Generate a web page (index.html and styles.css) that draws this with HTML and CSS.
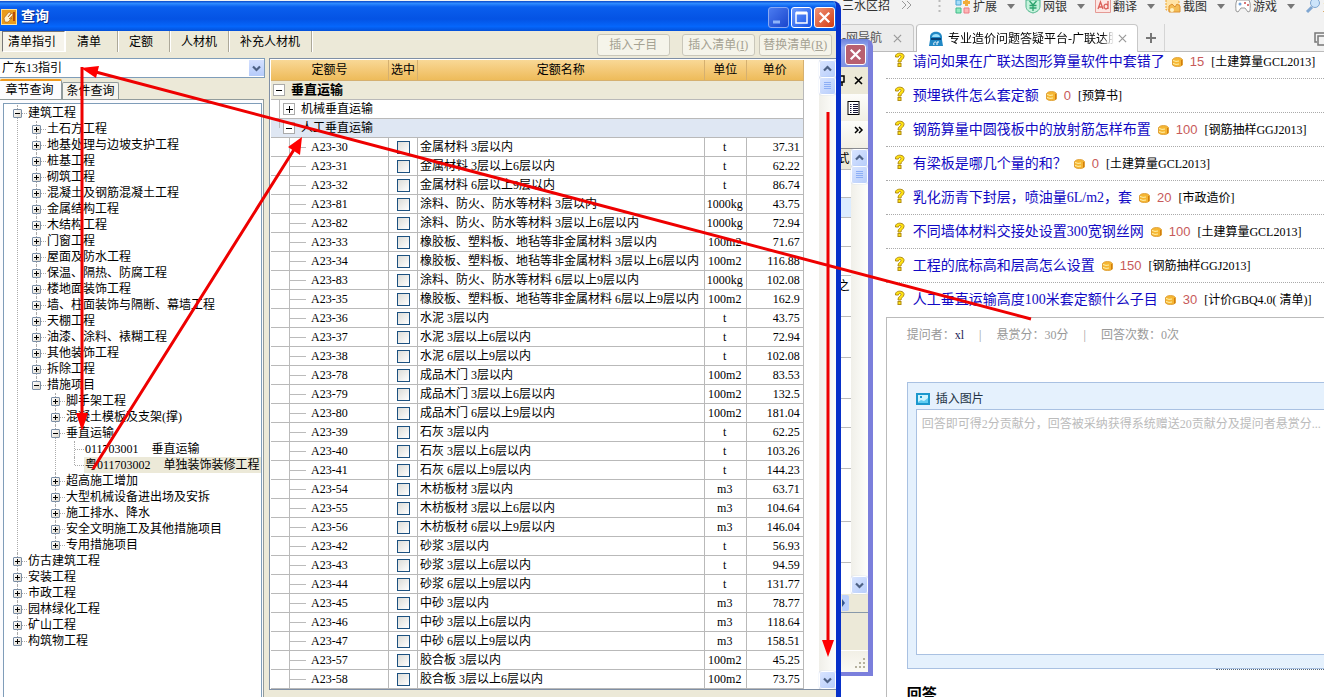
FILE: index.html
```html
<!DOCTYPE html>
<html lang="zh-CN">
<head>
<meta charset="utf-8">
<title>查询</title>
<link rel="stylesheet" href="styles.css">
</head>
<body>
<svg class="defs" aria-hidden="true">
  <symbol id="i-q" viewBox="0 0 11 15"><path d="M1.500 5C.5 0 10.500 0 10 4.500C9.700 7.500 7 7 7 10H4C3.800 6.500 7 6 7 4.500C7 3 4.500 3 4.500 5Z" fill="#ffe312" stroke="#b18b12"/><rect x="4" y="11.500" width="3" height="3" fill="#ffe312" stroke="#b18b12"/></symbol>
  <symbol id="i-coin" viewBox="0 0 11 10"><path d="M.5 2.500Q2 .5 5.500.5T10.500 2.500V8Q9 9.500 5.500 9.500T.5 8z" fill="#f6b632" stroke="#e0a23a"/><path d="M1 3.500Q4 5 7 4M1 6.500Q4 8 7 7" fill="none" stroke="#fff3ad"/><path d="M9.500 3v5.500" stroke="#d27d0d"/></symbol>
  <symbol id="i-up" viewBox="0 0 15 16"><path d="M4 9.500 7.500 6 11 9.500" fill="none" stroke="#4d6185" stroke-width="2.200"/></symbol>
  <symbol id="i-down" viewBox="0 0 15 16"><path d="M4 6.500 7.500 10 11 6.500" fill="none" stroke="#4d6185" stroke-width="2.200"/></symbol>
  <symbol id="i-grip" viewBox="0 0 15 16"><path d="M4 4.500h7M4 6.500h7M4 8.500h7M4 10.500h7" stroke="#8caef5"/></symbol>
  <symbol id="i-x" viewBox="0 0 20 20"><path d="M5 5 15 15M15 5 5 15" stroke="#fff" stroke-width="2.400"/></symbol>
  <symbol id="i-tri" viewBox="0 0 8 5"><path d="M0 0h8L4 5z" fill="#777"/></symbol>
  <symbol id="i-close" viewBox="0 0 10 10"><path d="M1 1 9 9M9 1 1 9" stroke="#999" stroke-width="1.300"/></symbol>
</svg>

<div class="desktop">
  <section class="browser" aria-label="浏览器">
    <div class="browser-tools">
      <span class="bookmark">三水区招</span>
      <svg class="more" width="12" height="10" viewBox="0 0 12 10"><path d="M1 1l4 4-4 4M6 1l4 4-4 4" fill="none" stroke="#999"/></svg>
      <svg class="dots" width="3" height="14" viewBox="0 0 3 14"><path d="M1.500 0v14" stroke="#bbb" stroke-width="2" stroke-dasharray="2 3"/></svg>
      <button class="tool"><svg width="16" height="15" viewBox="0 0 16 15"><path d="M9 9h5v5H9z" fill="#fdb7b7" stroke="#ed7b85"/><path d="M1 9h5v5H1z" fill="#92ebc0" stroke="#41ba8a"/><path d="M1 1h5v5H1z" fill="#a8ddf9" stroke="#47a5d6"/><path d="M11.500 0v7M8 3.500h7" stroke="#f2ac39" stroke-width="3"/></svg><span>扩展</span><svg width="8" height="5"><use href="#i-tri"/></svg></button>
      <button class="tool"><svg width="16" height="15" viewBox="0 0 16 15"><path d="M1 1v6c0 4 3 6 7 7 4-1 7-3 7-7V1z" fill="#c6f2dc" stroke="#4fb58b"/><path d="M4.500 2 8 6l3.500-4M4.500 6.500h7M4.500 9h7M8 6v6" fill="none" stroke="#2ca36d" stroke-width="1.300"/></svg><span>网银</span><svg width="8" height="5"><use href="#i-tri"/></svg></button>
      <button class="tool"><svg width="16" height="15" viewBox="0 0 16 15"><path d="M.5 0v13.500h15V0" fill="#fde6e3" stroke="#e59a95"/><path d="M3 10 5.500 3 8 10M4 8h3M13 2v8M13 7a2 2.300 0 1 0 0 1" fill="none" stroke="#db5f58" stroke-width="1.300"/></svg><span>翻译</span><svg width="8" height="5"><use href="#i-tri"/></svg></button>
      <button class="tool"><svg width="16" height="15" viewBox="0 0 16 15"><rect x="1" y="0" width="13" height="11" fill="#ffe4a8" stroke="#eea52f" stroke-dasharray="2 1"/><path d="M4 13V7l3-2 3 3 2-3 3 2v6z" fill="#f3bd56" stroke="#dd9130"/><circle cx="7" cy="11" r="2" fill="#fff3c4"/></svg><span>截图</span><svg width="8" height="5"><use href="#i-tri"/></svg></button>
      <button class="tool"><svg width="16" height="15" viewBox="0 0 16 15"><path d="M2 1h12c2 4 1 8 1 11l-2 1-3-4H6l-3 4-2-1C1 9 0 5 2 1z" fill="#fff" stroke="#999"/><circle cx="5" cy="5" r="1.500" fill="#71a2d8"/><path d="M9 4h2M12 6h2" stroke="#d97777" stroke-width="2"/></svg><span>游戏</span><svg width="8" height="5"><use href="#i-tri"/></svg></button>
      <button class="tool"><svg width="16" height="15" viewBox="0 0 16 15"><circle cx="10" cy="4" r="4.500" fill="#cce4fa" stroke="#7fa6d1"/><path d="M7 8 2 13" stroke="#7fa6d1" stroke-width="3"/></svg><span>主页</span></button>
    </div>
    <div class="browser-tabs">
      <div class="btab"><span>-网导航</span><svg width="9" height="9"><use href="#i-close"/></svg></div>
      <div class="btab active">
        <svg width="16" height="16" viewBox="0 0 16 16"><path d="M2 6C2-1 14-1 14 6v3l1 6H1l1-6z" fill="#2188c5"/><path d="M4 6c0-4 8-4 8 0z" fill="#9fe0fb"/><path d="M3 8h10" stroke="#073f75" stroke-width="2"/><path d="M6 14c-1-3 1-3 2-3M9 14v-3h2" fill="none" stroke="#fff"/></svg>
        <span class="btab-title">专业造价问题答疑平台-广联达服</span><svg width="9" height="9"><use href="#i-close"/></svg>
      </div>
      <button class="newtab" aria-label="新标签"><svg width="12" height="12" viewBox="0 0 12 12"><path d="M6 1v10M1 6h10" stroke="#777" stroke-width="2"/></svg></button>
      <svg class="restore" width="12" height="14" viewBox="0 0 12 14"><path d="M12 1H1v9h2M12 4H4v9h8" fill="none" stroke="#777" stroke-width="1.500"/></svg>
    </div>
    <main class="page">
      <ul class="questions" id="questions"></ul>
      <article class="detail">
        <p class="meta"><span>提问者：<b>xl</b></span><i>|</i><span>悬赏分：30分</span><i>|</i><span>回答次数：0次</span></p>
        <div class="editor">
          <button class="insert-pic"><svg width="14" height="12" viewBox="0 0 14 12"><rect x="1" y="1" width="12" height="10" fill="#cdf4ff" stroke="#1b98cd" stroke-width="2"/><path d="M2 9l3-2 3 1 4-3v5H2z" fill="#5fcdf2"/><path d="M4 3h2v2H4z" fill="#1b98cd"/></svg><label for="answer">插入图片</label></button>
          <textarea id="answer" placeholder="回答即可得2分贡献分，回答被采纳获得系统赠送20贡献分及提问者悬赏分..."></textarea>
        </div>
        <div class="hint-edge"></div>
        <h2>回答</h2>
      </article>
    </main>
  </section>

  <section class="backwin" aria-label="后台窗口">
    <div class="bw-title"><button class="bw-close" aria-label="关闭"><svg width="19" height="19"><use href="#i-x"/></svg></button></div>
    <div class="bw-body">
      <div class="bw-bar"><svg width="25" height="12" viewBox="0 0 25 12"><path d="M0 1h5v6H0M3 7v4" fill="none" stroke="#000" stroke-width="1.500"/><path d="M16 2l7 7M23 2l-7 7" stroke="#000" stroke-width="1.600"/></svg></div>
      <div class="bw-bar light"><svg width="20" height="14" viewBox="0 0 20 14"><rect x="4" y=".5" width="11" height="13" fill="#fff" stroke="#000"/><path d="M6 3.500h1.500M9 3.500h5M6 5.500h1.500M9 5.500h5M6 7.500h1.500M9 7.500h5M6 9.500h1.500M9 9.500h5M6 11.500h1.500M9 11.500h5" stroke="#113"/></svg></div>
      <div class="bw-bar light arrow"><svg width="16" height="8" viewBox="0 0 16 8"><path d="M7 1l3 3-3 3M11 1l3 3-3 3" fill="none" stroke="#000" stroke-width="1.500"/></svg></div>
      <div class="bw-grid">
        <div class="bw-cells"><span class="h">式</span><span></span><span class="sel"></span><span class="r2"></span><span class="r2"></span><span class="r3">之</span><span class="r3"></span><span class="r3"></span><span class="r2"></span><span class="r3"></span><span class="r4"></span><span class="r3"></span></div>
        <div class="scroll"><button aria-label="上"><svg><use href="#i-up"/></svg></button><button aria-label="滑块"><svg><use href="#i-grip"/></svg></button><button class="end" aria-label="下"><svg><use href="#i-down"/></svg></button></div>
      </div>
      <div class="bw-hscroll"><svg width="8" height="16" viewBox="0 0 8 16"><path d="M0 0h5q2 0 2 2v12q0 2-2 2H0z" fill="#bcd0fb"/><path d="M0 4l3 4-3 4z" fill="#34558f"/></svg></div>
      <div class="bw-blank"></div>
      <div class="bw-status"><svg width="12" height="12" viewBox="0 0 12 12"><path d="M9 1h2M9 5h2M9 9h2M5 5h2M5 9h2M1 9h2" stroke="#b5b19e" stroke-width="2"/></svg></div>
    </div>
  </section>

  <section class="dialog" aria-label="查询">
    <header class="titlebar">
      <svg width="16" height="16" viewBox="0 0 16 16"><rect x=".5" y=".5" width="15" height="15" fill="#e99b1b" stroke="#ffe29a"/><path d="M3 9l5-6 2 1-3 4 4-4 1 2-4 4 3-1-4 4H4z" fill="#fff3cf" stroke="#9c4b0b" stroke-width=".5"/><path d="M13 3v9" stroke="#b64c08" stroke-width="2"/></svg>
      <h1>查询</h1>
      <button class="cap" aria-label="最小化"><svg width="19" height="19" viewBox="0 0 19 19"><path d="M4 14h7" stroke="#8fb4fa" stroke-width="3"/></svg></button>
      <button class="cap lit" aria-label="最大化"><svg width="19" height="19" viewBox="0 0 19 19"><path d="M4 5h11v10H4z" fill="none" stroke="#fff" stroke-width="1.500"/><path d="M4 5h11" stroke="#fff" stroke-width="3"/></svg></button>
      <button class="cap close" aria-label="关闭"><svg width="19" height="19"><use href="#i-x"/></svg></button>
    </header>
    <nav class="toolbar">
      <button class="tb on">清单指引</button><button class="tb">清单</button><button class="tb">定额</button><button class="tb">人材机</button><button class="tb">补充人材机</button>
      <div class="actions"><button disabled class="first">插入子目</button><button disabled>插入清单(<u>I</u>)</button><button disabled>替换清单(<u>R</u>)</button></div>
    </nav>
    <div class="content">
      <aside class="left">
        <div class="combo"><select aria-label="指引"><option>广东13指引</option></select><span class="combo-arrow"><svg width="15" height="16"><use href="#i-down"/></svg></span></div>
        <div class="subtabs"><button class="on">章节查询</button><button>条件查询</button></div>
        <div class="treepane"><div class="treebox" id="tree"></div></div>
      </aside>
      <div class="right">
        <div class="tablewrap">
          <table>
            <colgroup><col class="c-no"><col class="c-ck"><col><col class="c-unit"><col class="c-price"></colgroup>
            <thead><tr><th>定额号</th><th>选中</th><th>定额名称</th><th>单位</th><th>单价</th></tr></thead>
            <tbody id="rows">
              <tr class="g g1"><td colspan="5"><div><button class="sq" aria-label="折叠"></button>垂直运输</div></td></tr>
              <tr class="g g2"><td colspan="5"><div><button class="sq plus" aria-label="展开"></button>机械垂直运输</div></td></tr>
              <tr class="g g2 cur"><td colspan="5"><div><button class="sq" aria-label="折叠"></button>人工垂直运输</div></td></tr>
            </tbody>
          </table>
        </div>
        <div class="scroll"><button aria-label="上"><svg><use href="#i-up"/></svg></button><button aria-label="滑块"><svg><use href="#i-grip"/></svg></button><button class="end" aria-label="下"><svg><use href="#i-down"/></svg></button></div>
      </div>
    </div>
  </section>

  <svg class="marks" viewBox="0 0 1324 697" preserveAspectRatio="none" aria-hidden="true">
    <path d="M1031 319 92 71M82 67V418M93 469 295 148M828 112V644" fill="none" stroke="#ee0000" stroke-width="3"/>
    <path d="M81 68 99 66 96 78zM76 413h12l-6 18zM302 137 288 147 300 155zM822 640h12l-6 17z" fill="#ff0000"/>
  </svg>
</div>
<script src="app.js"></script>
</body>
</html>
```
FILE: app.js
```js
const rows = [
  ['30', '金属材料 3层以内', 't', '37.31'],
  ['31', '金属材料 3层以上6层以内', 't', '62.22'],
  ['32', '金属材料 6层以上9层以内', 't', '86.74'],
  ['81', '涂料、防火、防水等材料 3层以内', '1000kg', '43.75'],
  ['82', '涂料、防火、防水等材料 3层以上6层以内', '1000kg', '72.94'],
  ['33', '橡胶板、塑料板、地毡等非金属材料 3层以内', '100m2', '71.67'],
  ['34', '橡胶板、塑料板、地毡等非金属材料 3层以上6层以内', '100m2', '116.88'],
  ['83', '涂料、防火、防水等材料 6层以上9层以内', '1000kg', '102.08'],
  ['35', '橡胶板、塑料板、地毡等非金属材料 6层以上9层以内', '100m2', '162.9'],
  ['36', '水泥 3层以内', 't', '43.75'],
  ['37', '水泥 3层以上6层以内', 't', '72.94'],
  ['38', '水泥 6层以上9层以内', 't', '102.08'],
  ['78', '成品木门 3层以内', '100m2', '83.53'],
  ['79', '成品木门 3层以上6层以内', '100m2', '132.5'],
  ['80', '成品木门 6层以上9层以内', '100m2', '181.04'],
  ['39', '石灰 3层以内', 't', '62.25'],
  ['40', '石灰 3层以上6层以内', 't', '103.26'],
  ['41', '石灰 6层以上9层以内', 't', '144.23'],
  ['54', '木枋板材 3层以内', 'm3', '63.71'],
  ['55', '木枋板材 3层以上6层以内', 'm3', '104.64'],
  ['56', '木枋板材 6层以上9层以内', 'm3', '146.04'],
  ['42', '砂浆 3层以内', 't', '56.93'],
  ['43', '砂浆 3层以上6层以内', 't', '94.59'],
  ['44', '砂浆 6层以上9层以内', 't', '131.77'],
  ['45', '中砂 3层以内', 'm3', '78.77'],
  ['46', '中砂 3层以上6层以内', 'm3', '118.64'],
  ['47', '中砂 6层以上9层以内', 'm3', '158.51'],
  ['57', '胶合板 3层以内', '100m2', '45.25'],
  ['58', '胶合板 3层以上6层以内', '100m2', '73.75']
];
document.getElementById('rows').insertAdjacentHTML('beforeend', rows.map(([no, name, unit, price]) =>
  `<tr><td class="no">A23-${no}</td><td class="ck"><input type="checkbox" aria-label="A23-${no}"></td><td class="name">${name}</td><td class="unit">${unit}</td><td class="price">${price}</td></tr>`).join(''));

const tree = [
  ['建筑工程', [
    ['土石方工程'], ['地基处理与边坡支护工程'], ['桩基工程'], ['砌筑工程'],
    ['混凝土及钢筋混凝土工程'], ['金属结构工程'], ['木结构工程'], ['门窗工程'],
    ['屋面及防水工程'], ['保温、隔热、防腐工程'], ['楼地面装饰工程'],
    ['墙、柱面装饰与隔断、幕墙工程'], ['天棚工程'], ['油漆、涂料、裱糊工程'],
    ['其他装饰工程'], ['拆除工程'],
    ['措施项目', [
      ['脚手架工程'], ['混凝土模板及支架(撑)'],
      ['垂直运输', [
        ['<span>011703001</span><span>垂直运输</span>', 'leaf'],
        ['<span>粤011703002</span><span>单独装饰装修工程</span>', 'leaf sel']
      ]],
      ['超高施工增加'], ['大型机械设备进出场及安拆'], ['施工排水、降水'],
      ['安全文明施工及其他措施项目'], ['专用措施项目']
    ]]
  ]],
  ['仿古建筑工程'], ['安装工程'], ['市政工程'], ['园林绿化工程'], ['矿山工程'], ['构筑物工程']
];
const branch = items => `<ul>${items.map(([label, sub]) => {
  if (typeof sub === 'string') return `<li class="${sub}"><div class="node"><span class="label">${label}</span></div></li>`;
  return `<li><div class="node"><button class="box ${sub ? '' : 'plus'}" aria-label="${sub ? '折叠' : '展开'}"></button><span class="label">${label}</span></div>${sub ? branch(sub) : ''}</li>`;
}).join('')}</ul>`;
document.getElementById('tree').innerHTML = branch(tree);

const questions = [
  ['请问如果在广联达图形算量软件中套错了', 15, '土建算量GCL2013'],
  ['预埋铁件怎么套定额', 0, '预算书'],
  ['钢筋算量中圆筏板中的放射筋怎样布置', 100, '钢筋抽样GGJ2013'],
  ['有梁板是哪几个量的和？', 0, '土建算量GCL2013'],
  ['乳化沥青下封层，喷油量6L/m2，套', 20, '市政造价'],
  ['不同墙体材料交接处设置300宽钢丝网', 100, '土建算量GCL2013'],
  ['工程的底标高和层高怎么设置', 150, '钢筋抽样GGJ2013'],
  ['人工垂直运输高度100米套定额什么子目', 30, '计价GBQ4.0( 清单)']
];
document.getElementById('questions').innerHTML = questions.map(([t, p, c]) =>
  `<li><svg class="q" width="11" height="15"><use href="#i-q"/></svg><a href="#">${t}</a><svg width="11" height="10"><use href="#i-coin"/></svg><span class="pts">${p}</span><span class="cat">[${c}]</span></li>`).join('');
```
FILE: styles.css
```css
* { box-sizing: border-box; }
body {
  margin: 0;
  font: 12px/16px "Liberation Serif", "Noto Sans CJK SC", serif;
  color: #000;
}
button, select, textarea { font: inherit; color: inherit; margin: 0; }
button { padding: 0; border: 0; background: none; }
ul { list-style: none; margin: 0; padding: 0; }
h1, h2, p { margin: 0; }
svg { display: block; flex: none; }
.defs { position: absolute; width: 0; height: 0; }
.desktop { position: relative; height: 100vh; overflow: hidden; background: #fff; }

/* browser */
.browser { height: 100%; display: flex; flex-direction: column; }
.browser-tools {
  display: flex; align-items: flex-start; height: 24px; padding-left: 63.6%;
  background: #f2f2f2; overflow: hidden; line-height: 12px; color: #333; white-space: nowrap;
}
.bookmark { flex: none; margin-right: 11px; }
.more { margin-right: 25px; }
.dots { margin-right: 14px; }
.tool { display: flex; align-items: center; gap: 2px; width: 70px; height: 13px; flex: none; line-height: 12px; }
.tool > svg:last-child { margin-left: 8px; }
.browser-tabs {
  display: flex; height: 28px; padding-left: 63.6%; background: #f2f2f2;
  border-bottom: 1px solid #bbb; white-space: nowrap;
}
.btab {
  display: flex; align-items: center; justify-content: space-between; flex: none;
  width: 72px; padding: 0 11px 0 0; border: 1px solid #c8c8c8; border-left: 0;
  border-bottom: 0; border-radius: 0 4px 0 0; color: #555; background: #ececec;
}
.btab.active {
  width: 222px; margin: 0 0 -1px 2px; padding: 0 10px 0 11px; gap: 4px; color: #000;
  border-left: 1px solid #bbb; border-radius: 4px 4px 0 0; background: #fff;
}
.btab-title { flex: 1; overflow: hidden; -webkit-mask-image: linear-gradient(90deg, #000 93%, transparent); mask-image: linear-gradient(90deg, #000 93%, transparent); }
.newtab { display: flex; align-items: center; padding: 0 7px; border-right: 1px solid #d5d5d5; }
.restore { margin: 8px -2px 0 auto; }
.page { flex: 1; min-height: 0; overflow: hidden; padding-left: 66.9%; display: flex; flex-direction: column; }
.questions { margin-top: -7px; }
.questions li {
  display: flex; align-items: center; gap: 7px; height: 34px; padding: 0 0 0 8px;
  border-bottom: 1px dotted #aaa; white-space: nowrap;
}
.questions li:last-child { border-bottom: 0; }
.questions .q { margin: 0 1px 5px 0; }
.questions a { font-size: 14px; color: #1109c4; text-decoration: none; }
.pts { font: 13px/16px "Liberation Sans", sans-serif; color: #c75a5a; }
.detail { flex: 1; border: 1px solid #bbb; border-right: 0; border-bottom: 0; padding: 9px 0 0 20px; white-space: nowrap; }
.meta { display: flex; color: #999; gap: 15px; }
.meta b { font-weight: normal; color: #225; }
.meta i { font-style: normal; }
.editor {
  height: 287px; margin-top: 39px; padding: 8px 0 13px 8px; display: flex; flex-direction: column; gap: 2px;
  border: 1px solid #a9c1e2; border-right: 0; background: #e5f1fd;
}
.insert-pic { display: flex; align-items: center; gap: 6px; color: #234; align-self: flex-start; }
.editor textarea {
  flex: 1; width: 100%; resize: none; border: 1px solid #a9c1e2; border-right: 0; outline: 0;
  padding: 6px 5px; background: #fff; overflow: hidden; white-space: nowrap;
}
.editor textarea::placeholder { color: #bbb; }
.hint-edge { margin-left: auto; width: 26%; border-top: 1px dotted #567; }
.detail h2 { font-size: 15px; line-height: 20px; margin-top: 14px; }

/* window behind the dialog */
.backwin {
  position: absolute; left: 0; top: 39px; width: 65.9%; height: 637px;
  display: flex; flex-direction: column; padding: 0 5px 4px 0;
  background: #7b7fdc; border-radius: 0 7px 0 0;
}
.bw-title { height: 28px; display: flex; justify-content: flex-end; align-items: center; padding: 2px 2px 0 0; background: linear-gradient(#6d83dd, #96a9ee 30%, #7d8fe2); }
.bw-close { border: 1px solid #fff; border-radius: 3px; background: #b86070; width: 21px; height: 21px; }
.bw-body { flex: 1; display: flex; flex-direction: column; background: #ece9d8; }
.bw-bar { height: 27px; display: flex; align-items: center; justify-content: flex-end; padding-right: 4px; background: #ece9d8; }
.bw-bar.light { background: linear-gradient(#fdfdfa, #f1efe4); }
.bw-bar.arrow { padding-bottom: 10px; }
.bw-grid { height: 446px; display: flex; border-top: 1px solid #888; background: #fff; }
.bw-cells { flex: 1; overflow: hidden; text-align: right; }
.bw-cells span { display: block; height: 28px; border-bottom: 1px solid #bbb; line-height: 20px; padding-right: 1px; }
.bw-cells .h { height: 21px; background: #ece9d8; }
.bw-cells .sel { height: 20px; background: #dcecff; }
.bw-cells .r2 { height: 29px; }
.bw-cells .r3 { height: 41px; }
.bw-cells .r4 { height: 53px; }
.bw-hscroll { height: 19px; display: flex; justify-content: flex-end; align-items: center; padding-right: 18px; border-bottom: 1px solid #8899aa; }
.bw-blank { flex: 1; }
.bw-status { height: 22px; display: flex; justify-content: flex-end; align-items: flex-end; padding: 2px; border-top: 1px solid #fff; background: linear-gradient(#f2f0e6, #fbfaf4); }

.scroll { width: 17px; flex: none; display: flex; flex-direction: column; align-items: center; gap: 1px; padding: 1px 0; background: linear-gradient(90deg, #f0efe9, #fefefb); }
.scroll button { width: 15px; height: 16px; border-radius: 2px; background: linear-gradient(135deg, #d8e4ff, #b8cefb); box-shadow: 0 0 0 1px #fff, 0 0 1px 1px #9db5e8; }
.scroll svg { width: 15px; height: 16px; }
.scroll .end { margin-top: auto; }

/* query dialog */
.dialog {
  position: absolute; left: 0; top: 1px; bottom: 0; width: 63.5%;
  display: flex; flex-direction: column; border-right: 5px solid #0831c9; border-radius: 0 8px 0 0;
  background: #ece9d8; overflow: hidden;
}
.titlebar {
  height: 30px; margin-right: -5px; display: flex; align-items: center; gap: 2px; padding: 2px 6px 0 1px;
  background: linear-gradient(#0a48c8, #2f8bff 8%, #0a5fee 20%, #0453e4 60%, #0566fb 85%, #0450d8);
}
.titlebar h1 { flex: 1; margin-left: 2px; font-size: 14px; line-height: 18px; color: #fff; text-shadow: 1px 1px #0a2f8a; }
.cap { width: 21px; height: 21px; border: 1px solid #fff; border-radius: 3px; background: linear-gradient(135deg, #4b7bf0, #1a46cd); }
.cap:first-of-type { border-color: #8aa9f2; }
.cap.lit { background: linear-gradient(135deg, #6f9bff, #1553e3); }
.cap.close { background: linear-gradient(135deg, #f09478, #d23c12); }
.toolbar { height: 27px; display: flex; align-items: flex-start; padding-left: 2px; white-space: nowrap; }
.tb { height: 21px; min-width: 52px; padding: 0 11px; text-align: left; border-right: 1px solid #aca899; box-shadow: 1px 0 #fff; }
.tb.on { padding: 0 7px 0 5px; min-width: 63px; background: #f6f4ec; border: 1px solid #777; border-right-color: #fff; border-bottom-color: #fff; margin-right: 1px; }
.actions { margin-left: auto; display: flex; gap: 4px; padding: 3px 4px 0 0; }
.actions button { width: 73px; height: 22px; border: 1px solid #c9c7ba; border-radius: 3px; background: #f5f4ea; color: #a5a293; }
.actions .first { margin-right: 8px; }
.content { flex: 1; min-height: 0; display: grid; grid-template-columns: 265px 1fr; column-gap: 4px; }
.left { min-height: 0; display: flex; flex-direction: column; }
.combo { position: relative; height: 20px; border: 1px solid #7f9db9; border-left: 0; background: #fff; }
.combo select { width: 100%; height: 18px; appearance: none; border: 0; padding: 0 2px; background: transparent; }
.combo-arrow { position: absolute; right: 0; top: 1px; background: linear-gradient(#d4e0ff, #b5cbfa); pointer-events: none; }
.subtabs { display: flex; align-items: flex-end; height: 21px; }
.subtabs button { width: 57px; height: 17px; border: 1px solid #919b9c; border-bottom: 0; border-radius: 2px 2px 0 0; background: #f5f4ee; }
.subtabs .on { width: 62px; height: 20px; padding-right: 2px; border-top: 2px solid #f09a1e; border-left: 0; background: #fcfcfe; }
.treepane { flex: 1; min-height: 0; margin-right: 1px; padding: 3px 1px 0 3px; border: 1px solid #919b9c; border-left: 0; border-bottom: 0; background: #fcfcfe; }
.treebox { height: 100%; padding: 1px 0 0 9px; border: 1px solid #7f9db9; border-bottom: 0; background: #fff; overflow: hidden; }
.treebox ul ul { padding-left: 19px; }
.treebox li { position: relative; }
.treebox li::before { content: ""; position: absolute; left: 4px; top: 0; bottom: 0; border-left: 1px dotted #aaa; }
.treebox li:last-child::before { bottom: auto; height: 8px; }
.node { position: relative; display: flex; align-items: center; height: 16px; white-space: nowrap; }
.node::before { content: ""; position: absolute; left: 5px; top: 8px; width: 9px; border-top: 1px dotted #aaa; }
.box {
  position: relative; width: 9px; height: 9px; margin-right: 6px; border: 1px solid #7b8ea5; border-radius: 1px;
  background: linear-gradient(#000, #000) 1px 3px / 5px 1px no-repeat, linear-gradient(135deg, #fff, #ddd8cc);
}
.box.plus { background: linear-gradient(#000, #000) 1px 3px / 5px 1px no-repeat, linear-gradient(#000, #000) 3px 1px / 1px 5px no-repeat, linear-gradient(135deg, #fff, #ddd8cc); }
.leaf .label { display: flex; gap: 13px; margin-left: 14px; padding: 0 1px; }
.leaf.sel .label { background: #ece9d8; }
.right { min-width: 0; min-height: 0; margin-bottom: 7px; display: flex; gap: 15px; border: 1px solid #7f8fa5; border-right: 0; background: #fff; padding: 1px 0 0 1px; overflow: hidden; }
.tablewrap { flex: 1; min-width: 0; overflow: hidden; }
table { width: 100%; table-layout: fixed; border-collapse: separate; border-spacing: 0; }
.c-no { width: 118px; }
.c-ck { width: 29px; }
.c-unit { width: 42px; }
.c-price { width: 57px; }
th, td { height: 19px; padding: 0 3px 0 2px; line-height: 16px; border: solid #b9b9b9; border-width: 0 1px 1px 0; white-space: nowrap; }
th { height: 21px; font-weight: normal; padding: 0; background: linear-gradient(#f9d896, #eebb5a); border-color: #d5b070; }
.no { padding: 0 0 0 40px; background: linear-gradient(#bbb, #bbb) 18px 0 / 1px 100% no-repeat, linear-gradient(#bbb, #bbb) 18px 9px / 17px 1px no-repeat; }
.ck { padding: 0; }
.ck input { display: block; appearance: none; width: 13px; height: 13px; margin: 0 auto; border: 1px solid #1c5180; background: linear-gradient(135deg, #dcdcd7, #fff); }
.unit { text-align: center; }
.price { text-align: right; }
.g div { display: flex; align-items: center; gap: 6px; }
.g1 td { background: #ece9d8; font-weight: bold; font-size: 13px; }
.g2 td { padding-left: 12px; background: linear-gradient(#bbb, #bbb) 8px 0 / 1px 100% no-repeat; }
.g2.cur td { background: linear-gradient(#bbb, #bbb) 8px 0 / 1px 9px no-repeat, #dfe7f3; }
.sq { width: 12px; height: 12px; border: 1px solid #aaa; background: linear-gradient(#000, #000) 2px 5px / 6px 1px no-repeat, #fff; }
.sq.plus { background: linear-gradient(#000, #000) 2px 5px / 7px 1px no-repeat, linear-gradient(#000, #000) 5px 2px / 1px 7px no-repeat, #fff; }

.marks { position: absolute; inset: 0; width: 100%; height: 100%; pointer-events: none; }
```
